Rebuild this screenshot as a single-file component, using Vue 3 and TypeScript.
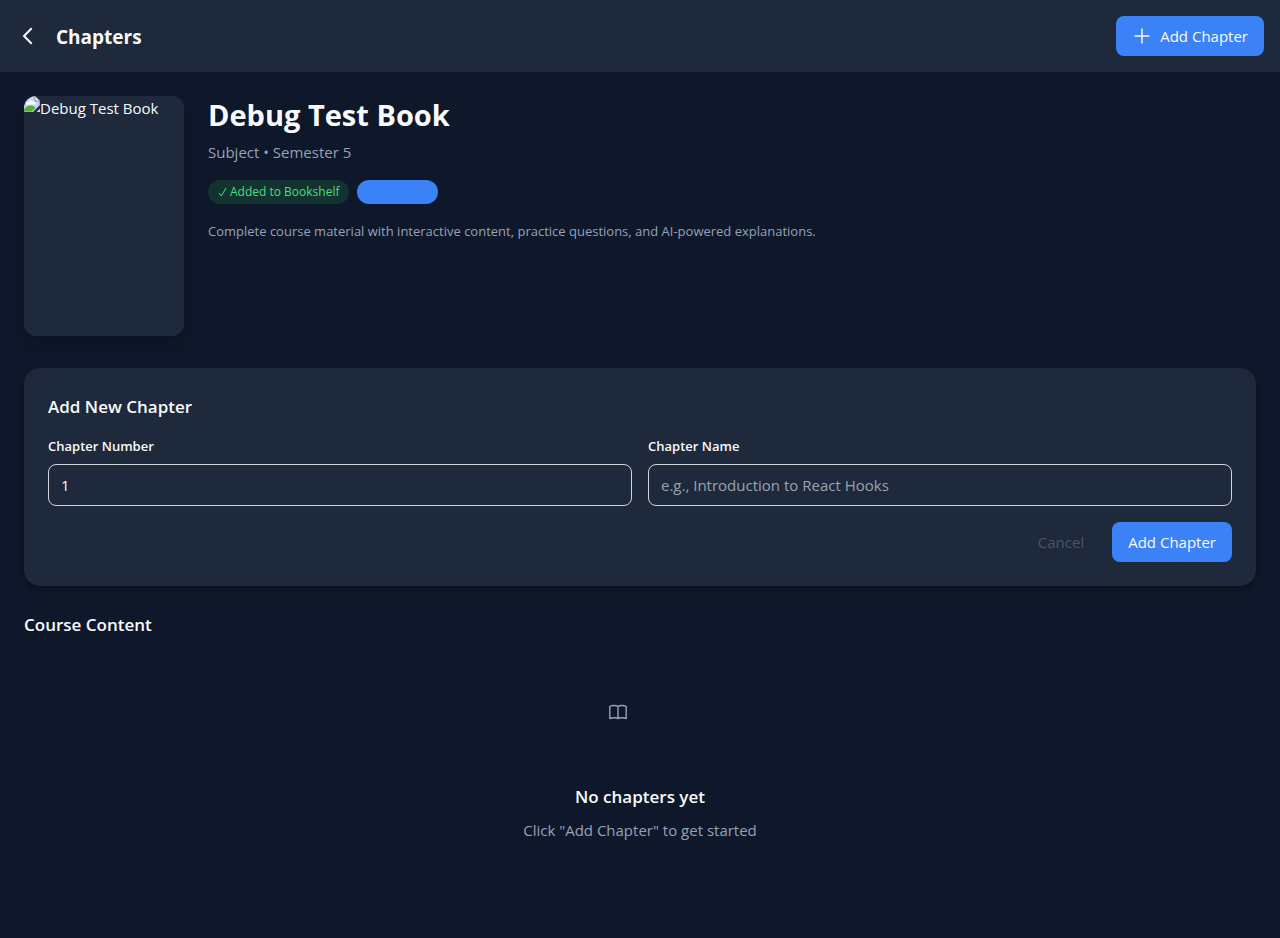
<script setup lang="ts">
import { ref } from 'vue'

interface Book {
  title: string
  subject: string
  semester: number
  description: string
}

const book: Book = {
  title: 'Debug Test Book',
  subject: 'Subject',
  semester: 5,
  description:
    'Complete course material with interactive content, practice questions, and AI-powered explanations.',
}

const chapterNumber = ref('1')
const chapterName = ref('')
</script>

<template>
  <div class="page">
    <header class="topbar">
      <button class="back" type="button" aria-label="Back">
        <svg viewBox="0 0 24 24" width="24" height="24" fill="none" stroke="currentColor" stroke-width="2">
          <path d="M15.700 4.300 8 12l7.700 7.700" />
        </svg>
      </button>
      <h1>Chapters</h1>
      <button class="primary" type="button">
        <svg viewBox="0 0 20 20" width="20" height="20" fill="none" stroke="currentColor" stroke-width="1.5">
          <path d="M10 2.500v15M2.500 10h15" />
        </svg>
        Add Chapter
      </button>
    </header>

    <main>
      <section class="book">
        <div class="cover">
          <svg class="missing" viewBox="0 0 16 16" width="16" height="16">
            <path d="M0 0h11l5 5v4L9 16H0z" fill="#c3d3f5" />
            <path d="M2 8.500c0-2 1-3 3-3 .5-2 3.500-2 4 0 2 0 3 1 3 3z" fill="#f5f8ff" />
            <path d="M0 16v-2.500C2 10.500 4 9.500 6.500 9.500c2 0 3.500.5 5 2.500l-4 4z" fill="#5aae36" />
            <path d="M11 0v5h5z" fill="#f4f4f4" stroke="#8a8a8a" />
            <path d="M16 12.500V16h-3.500z" fill="#c3d3f5" />
            <path d="M0 .5h11M15.500 5v4M0 15.500h8" stroke="#a3a7ad" fill="none" />
          </svg>
          <span>{{ book.title }}</span>
        </div>
        <div class="info">
          <h2>{{ book.title }}</h2>
          <p class="meta">{{ book.subject }} • Semester {{ book.semester }}</p>
          <div class="badges">
            <span class="badge added">
              <svg viewBox="0 0 9 10" width="9" height="10" fill="none" stroke="currentColor">
                <path d="M1 6l2.300 3L8 1" />
              </svg>
              Added to Bookshelf
            </span>
            <span class="badge plain"></span>
          </div>
          <p class="description">{{ book.description }}</p>
        </div>
      </section>

      <form class="card" @submit.prevent>
        <h3>Add New Chapter</h3>
        <div class="fields">
          <div class="field">
            <label for="chapter-number">Chapter Number</label>
            <input id="chapter-number" v-model="chapterNumber" type="text" inputmode="numeric" />
          </div>
          <div class="field">
            <label for="chapter-name">Chapter Name</label>
            <input
              id="chapter-name"
              v-model="chapterName"
              type="text"
              placeholder="e.g., Introduction to React Hooks"
            />
          </div>
        </div>
        <div class="actions">
          <button class="cancel" type="button">Cancel</button>
          <button class="primary" type="submit">Add Chapter</button>
        </div>
      </form>

      <section>
        <h3>Course Content</h3>
        <div class="empty">
          <div class="empty-icon">
            <svg viewBox="0 0 20 20" width="20" height="20" fill="none" stroke="currentColor" stroke-width="1.4" stroke-linecap="round" stroke-linejoin="round">
              <path d="M10 4.500C8.500 3.300 4 3.100 1.800 4.500v12C4 15.400 8.500 15.400 10 16.500zM10 4.500c1.500-1.200 6-1.400 8.200 0v12c-2.200-1.100-6.700-1.100-8.200 0z" />
            </svg>
          </div>
          <h3>No chapters yet</h3>
          <p>Click "Add Chapter" to get started</p>
        </div>
      </section>
    </main>
  </div>
</template>

<style>
body {
  margin: 0;
  background: #0f172a;
}
</style>

<style scoped>
.page {
  min-height: 100vh;
  background: #0f172a;
  color: #f8fafc;
  font-family: 'Open Sans', 'Noto Sans', sans-serif;
  font-size: 15px;
  line-height: 24px;
}
.page * {
  box-sizing: border-box;
}
h1,
h2,
h3,
p {
  margin: 0;
}
svg {
  display: block;
  flex: none;
}
button,
input {
  font: inherit;
}
button {
  border: 0;
  cursor: pointer;
}
.topbar {
  display: flex;
  align-items: center;
  gap: 16px;
  padding: 16px;
  background: #1e293b;
}
.back {
  padding: 0;
  background: none;
  color: #f8fafc;
}
.topbar h1 {
  flex: 1;
  padding-top: 2px;
  font-size: 19px;
  font-weight: 700;
  line-height: 28px;
}
.primary {
  display: flex;
  align-items: center;
  gap: 8px;
  padding: 8px 16px;
  border-radius: 8px;
  background: #3b82f6;
  color: #f8fafc;
}
main {
  padding: 24px;
}
.book {
  display: flex;
  gap: 24px;
  margin-bottom: 32px;
}
.cover {
  display: flex;
  flex: none;
  width: 160px;
  height: 240px;
  overflow: hidden;
  border-radius: 12px;
  background: #1e293b;
  box-shadow: 0 10px 15px -3px rgba(0, 0, 0, 0.1), 0 4px 6px -4px rgba(0, 0, 0, 0.1);
}
.info {
  flex: 1;
}
.info h2 {
  margin-bottom: 6px;
  font-size: 29px;
  font-weight: 700;
  line-height: 38px;
}
.meta {
  margin-bottom: 16px;
  color: #94a3b8;
}
.badges {
  display: flex;
  gap: 8px;
  margin-bottom: 16px;
}
.badge {
  display: flex;
  align-items: center;
  gap: 3px;
  height: 24px;
  padding: 4px 10px;
  border-radius: 12px;
  font-size: 12px;
  line-height: 16px;
}
.added {
  background: #12332f;
  color: #4ade80;
}
.plain {
  width: 81px;
  background: #3b82f6;
}
.description {
  color: #94a3b8;
  font-size: 13px;
  line-height: 22px;
}
.card {
  margin-bottom: 24px;
  padding: 24px;
  border-radius: 16px;
  background: #1e293b;
  box-shadow: 0 4px 6px -1px rgba(0, 0, 0, 0.3);
}
h3 {
  font-size: 17px;
  font-weight: 600;
  line-height: 30px;
}
.card h3 {
  margin-bottom: 14px;
}
.fields {
  display: grid;
  grid-template-columns: 1fr 1fr;
  gap: 16px;
  margin-bottom: 16px;
}
label {
  display: block;
  margin-bottom: 8px;
  font-size: 13px;
  font-weight: 600;
  line-height: 20px;
}
input {
  display: block;
  width: 100%;
  padding: 8px 12px;
  border: 1px solid #d1d5db;
  border-radius: 8px;
  background: transparent;
  color: #f8fafc;
  line-height: 24px;
  height: 42px;
}
input::placeholder {
  color: #9ca3af;
  opacity: 1;
}
.actions {
  display: flex;
  justify-content: flex-end;
  gap: 12px;
}
.cancel {
  padding: 8px 16px;
  background: none;
  color: #4b5563;
}
.empty {
  padding: 46px 0;
  text-align: center;
}
.empty-icon {
  width: 64px;
  height: 80px;
  margin: 0 auto 16px;
  padding-top: 16px;
  color: #94a3b8;
}
.empty h3 {
  margin-bottom: 6px;
}
.empty p {
  color: #94a3b8;
}
</style>
